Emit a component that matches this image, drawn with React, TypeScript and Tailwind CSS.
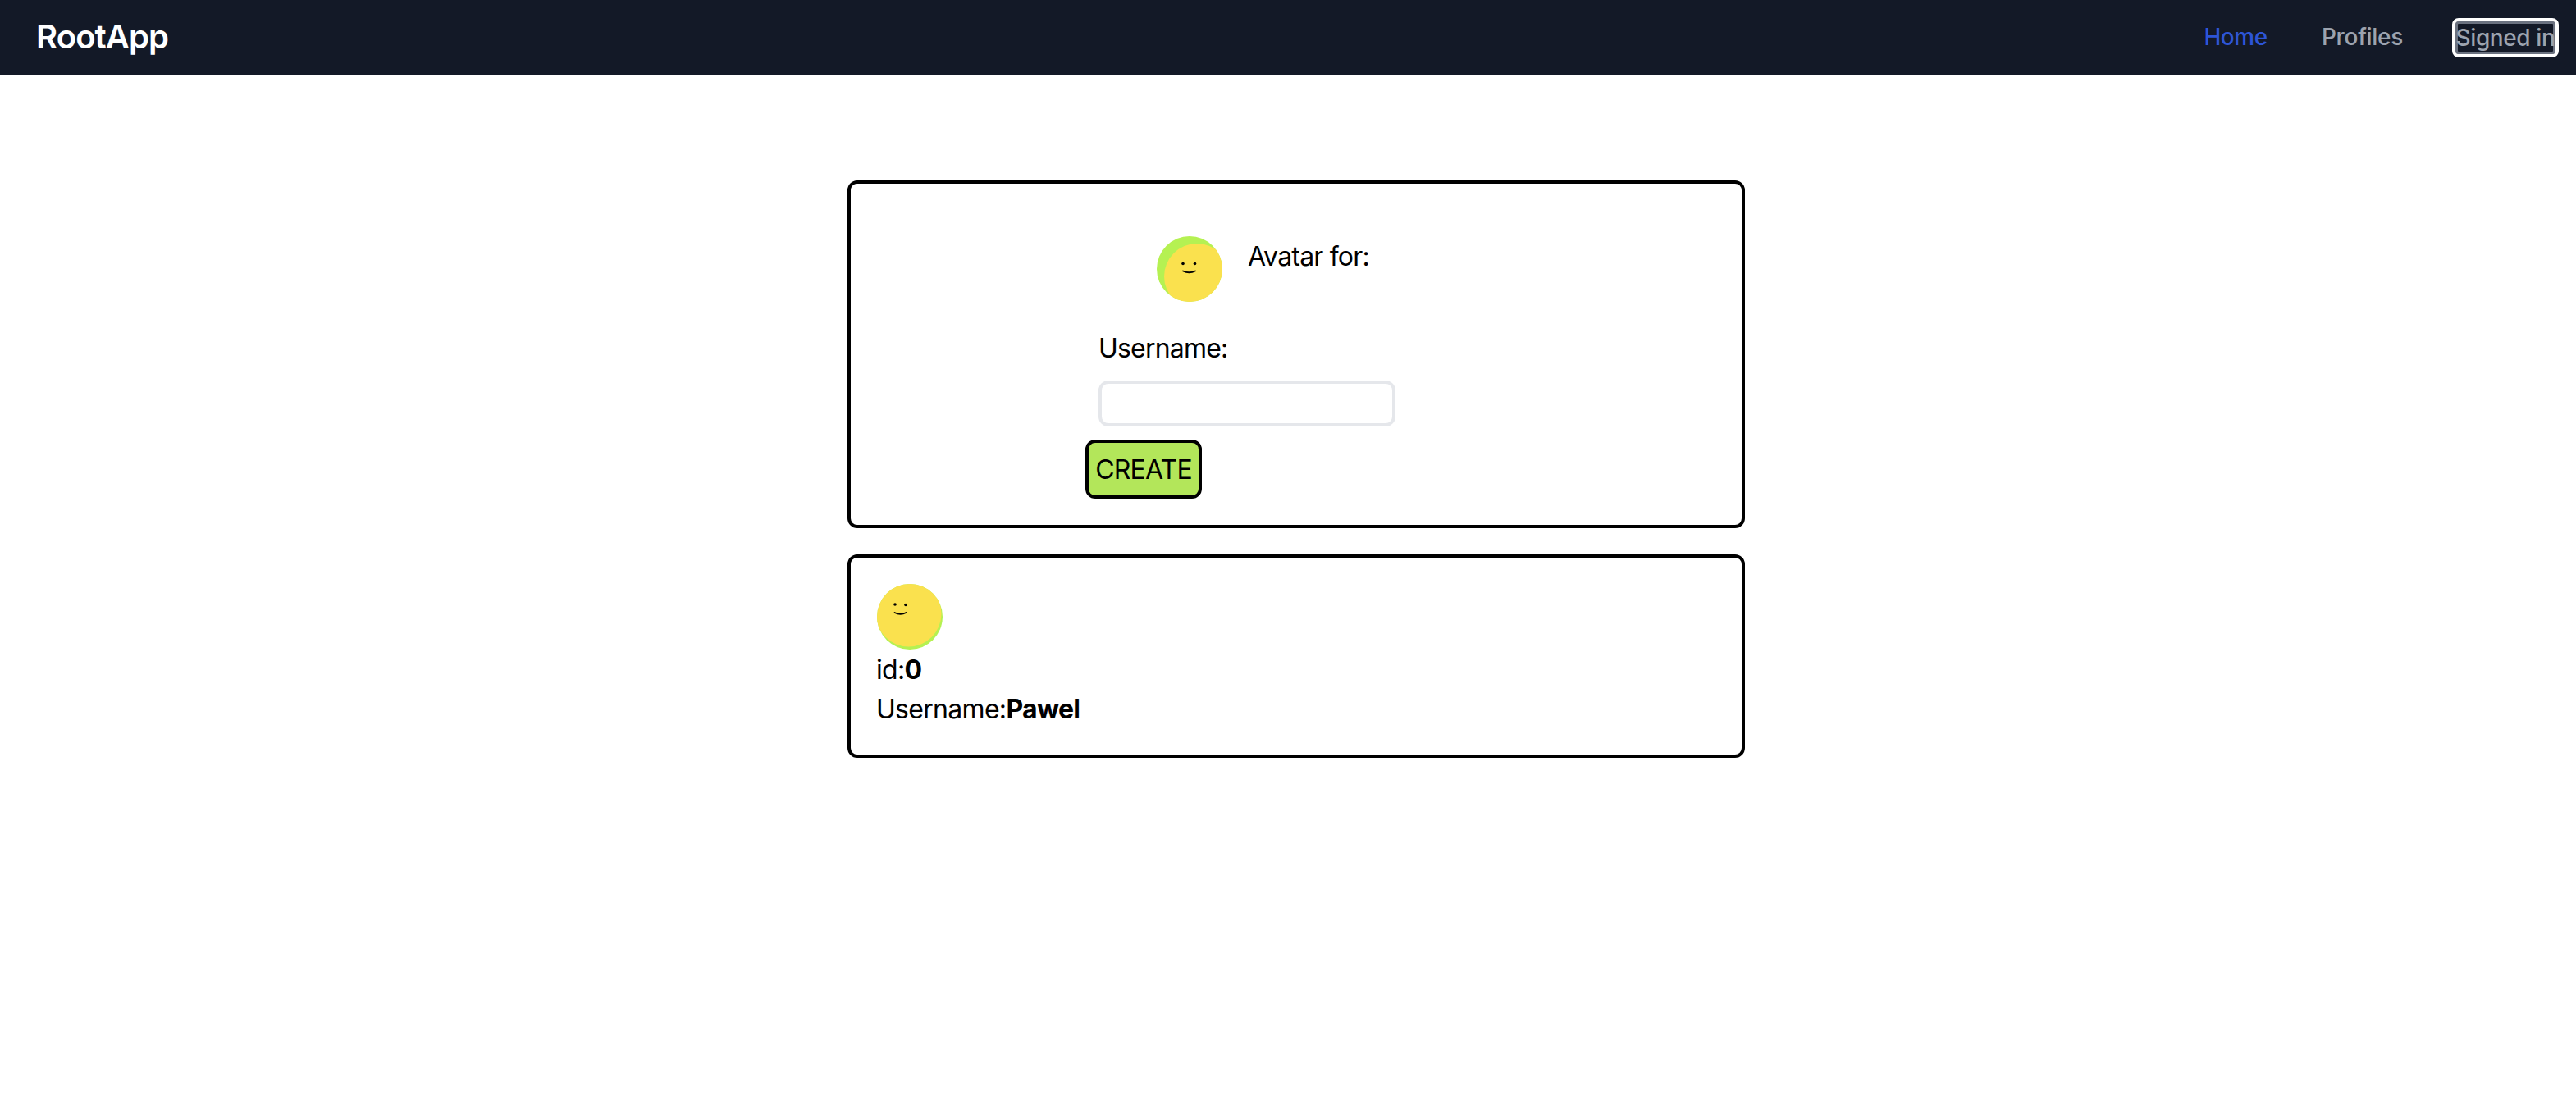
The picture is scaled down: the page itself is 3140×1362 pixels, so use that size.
const FONT = "font-['Inter','Liberation_Sans',sans-serif]";

function Avatar({ variant }: { variant: "a" | "b" }) {
  return (
    <svg width="80" height="80" viewBox="0 0 80 80" className="block shrink-0" aria-hidden="true">
      <defs>
        <clipPath id={`clip-${variant}`}>
          <circle cx="40" cy="40" r="40" />
        </clipPath>
      </defs>
      <circle cx="40" cy="40" r="40" fill="#b5f152" />
      <g clipPath={`url(#clip-${variant})`}>
        {variant === "a" ? (
          <circle cx="49" cy="49" r="40" fill="#fae14e" />
        ) : (
          <circle cx="38.5" cy="36.5" r="40" fill="#fae14e" />
        )}
      </g>
      {variant === "a" ? (
        <g>
          <circle cx="32" cy="33.5" r="1.8" fill="#000" />
          <circle cx="46.5" cy="33.5" r="1.8" fill="#000" />
          <path d="M32 42.5 Q39.5 46 47 42.5" fill="none" stroke="#000" strokeWidth="1.8" strokeLinecap="round" />
        </g>
      ) : (
        <g>
          <circle cx="22" cy="25" r="1.8" fill="#000" />
          <circle cx="35" cy="25.5" r="1.8" fill="#000" />
          <path d="M21.5 35 Q28.5 38.5 35.5 35" fill="none" stroke="#000" strokeWidth="1.8" strokeLinecap="round" />
        </g>
      )}
    </svg>
  );
}

export default function App() {
  return (
    <div className={`min-h-screen bg-white text-black ${FONT}`}>
      <nav className="flex h-[92px] items-center justify-between bg-[#131927] pl-[44px] pr-[21px]">
        <span className="pb-[2px] text-[40px] leading-[56px] font-semibold tracking-[-0.9px] text-white">RootApp</span>
        <div className="flex items-center">
          <a className="pb-[2px] text-[28px] leading-[40px] font-medium tracking-[-0.4px] text-[#2d55d6]">Home</a>
          <a className="ml-[66px] pb-[2px] text-[28px] leading-[40px] font-medium tracking-[-0.3px] text-[#9ca3af]">Profiles</a>
          <button className="ml-[60px] h-[48px] w-[130px] whitespace-nowrap rounded-[8px] border-[4px] border-white p-0 text-[28px] leading-[36px] font-medium tracking-[-0.4px] text-[#9ca3af] ring-[3px] ring-inset ring-[#6b7280]">
            Signed in
          </button>
        </div>
      </nav>

      <main className="pl-[20px] pt-[128px]">
        <div className="mx-auto flex w-[1094px] flex-col gap-[32px]">
          <section className="flex h-[424px] flex-col rounded-[12px] border-[4px] border-black pl-[286px] pt-[64px]">
            <div className="ml-[87px] flex gap-[31px]">
              <Avatar variant="a" />
              <span className="pt-[2px] text-[32px] leading-[46px] tracking-[-0.8px]">Avatar for:</span>
            </div>
            <label className="ml-[16px] mt-[34px] block text-[32px] leading-[46px] tracking-[-0.8px]">Username:</label>
            <input className="ml-[16px] mt-[16px] block h-[56px] w-[362px] rounded-[12px] border-[4px] border-[#e5e7eb] bg-white outline-none" />
            <button className="mt-[16px] h-[72px] w-[142px] rounded-[12px] border-[4px] border-black bg-[#b3e65a] pt-[2px] text-[32px] leading-[46px] tracking-[-0.8px]">
              CREATE
            </button>
          </section>

          <section className="flex h-[248px] flex-col rounded-[12px] border-[4px] border-black pl-[31px] pt-[32px]">
            <div className="pl-[1px]">
              <Avatar variant="b" />
            </div>
            <p className="pt-[2px] text-[32px] leading-[46px] tracking-[-0.7px]">
              id:<b className="font-bold">0</b>
            </p>
            <p className="pt-[2px] text-[32px] leading-[46px] tracking-[-0.7px]">
              Username:<b className="font-bold">Pawel</b>
            </p>
          </section>
        </div>
      </main>
    </div>
  );
}
